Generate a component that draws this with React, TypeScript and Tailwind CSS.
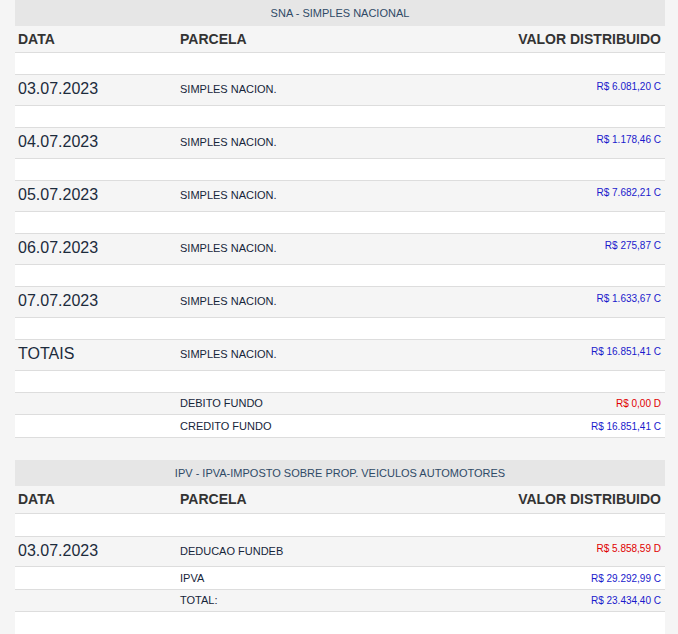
type Row = {
  date?: string;
  parcela?: string;
  valor?: string;
  debit?: boolean;
  tall?: boolean;
  white?: boolean;
  h?: string;
};

const sna: Row[] = [
  { white: true },
  { date: '03.07.2023', parcela: 'SIMPLES NACION.', valor: 'R$ 6.081,20 C', tall: true },
  { white: true },
  { date: '04.07.2023', parcela: 'SIMPLES NACION.', valor: 'R$ 1.178,46 C', tall: true },
  { white: true },
  { date: '05.07.2023', parcela: 'SIMPLES NACION.', valor: 'R$ 7.682,21 C', tall: true },
  { white: true },
  { date: '06.07.2023', parcela: 'SIMPLES NACION.', valor: 'R$ 275,87 C', tall: true },
  { white: true },
  { date: '07.07.2023', parcela: 'SIMPLES NACION.', valor: 'R$ 1.633,67 C', tall: true },
  { white: true },
  { date: 'TOTAIS', parcela: 'SIMPLES NACION.', valor: 'R$ 16.851,41 C', tall: true },
  { white: true },
  { parcela: 'DEBITO FUNDO', valor: 'R$ 0,00 D', debit: true },
  { parcela: 'CREDITO FUNDO', valor: 'R$ 16.851,41 C', white: true, h: 'h-[23px]' },
];

const ipv: Row[] = [
  { white: true, h: 'h-[23px]' },
  { date: '03.07.2023', parcela: 'DEDUCAO FUNDEB', valor: 'R$ 5.858,59 D', debit: true, tall: true, h: 'h-[30px]' },
  { parcela: 'IPVA', valor: 'R$ 29.292,99 C', white: true, h: 'h-[23px]' },
  { parcela: 'TOTAL:', valor: 'R$ 23.434,40 C' },
  { white: true, h: 'h-[23px]' },
];

function DataRow({ row }: { row: Row }) {
  const bg = row.white ? 'bg-white' : 'bg-[#f5f5f5]';
  const color = row.debit ? 'text-[#e00000]' : 'text-[#1a1acc]';
  if (row.tall) {
    return (
      <div className={`flex border-t border-[#dddddd] ${bg} ${row.h ?? 'h-[31px]'}`}>
        <div className="w-[162px] pl-[3px] flex items-center text-[16px] text-[#1c2b3c] pb-[2px]">{row.date}</div>
        <div className="flex-1 pl-[3px] flex items-center text-[11px] text-[#16253a] pb-[1px]">{row.parcela}</div>
        <div className={`pr-[4px] pt-[4px] text-[10px] text-right ${color}`}>{row.valor}</div>
      </div>
    );
  }
  return (
    <div className={`flex border-t border-[#dddddd] ${bg} ${row.h ?? 'h-[22px]'}`}>
      <div className="w-[162px] pl-[3px]">{row.date}</div>
      <div className="flex-1 pl-[3px] flex items-center text-[11px] text-[#16253a]">{row.parcela}</div>
      {row.valor && <div className={`pr-[4px] flex items-center text-[10px] ${color}`}>{row.valor}</div>}
    </div>
  );
}

function Section({ title, rows, headH = 'h-[26px]' }: { title: string; rows: Row[]; headH?: string }) {
  return (
    <div>
      <div className="h-[26px] bg-[#e6e6e6] flex items-center justify-center text-[11px] text-[#2f4a66]">
        {title}
      </div>
      <div className={`flex ${headH} items-center text-[14px] font-bold text-[#333333]`}>
        <div className="w-[162px] pl-[3px]">DATA</div>
        <div className="flex-1 pl-[3px]">PARCELA</div>
        <div className="pr-[4px]">VALOR DISTRIBUIDO</div>
      </div>
      {rows.map((r, i) => (
        <DataRow key={i} row={r} />
      ))}
    </div>
  );
}

export default function App() {
  return (
    <div className="min-h-[634px] bg-[#f5f5f5] font-['Liberation_Sans',Arial,sans-serif] pl-[15px] pr-[13px]">
      <Section title="SNA - SIMPLES NACIONAL" rows={sna} />
      <div className="h-[23px] border-t border-[#dddddd]" />
      <Section title="IPV - IPVA-IMPOSTO SOBRE PROP. VEICULOS AUTOMOTORES" rows={ipv} headH="h-[27px]" />
    </div>
  );
}
